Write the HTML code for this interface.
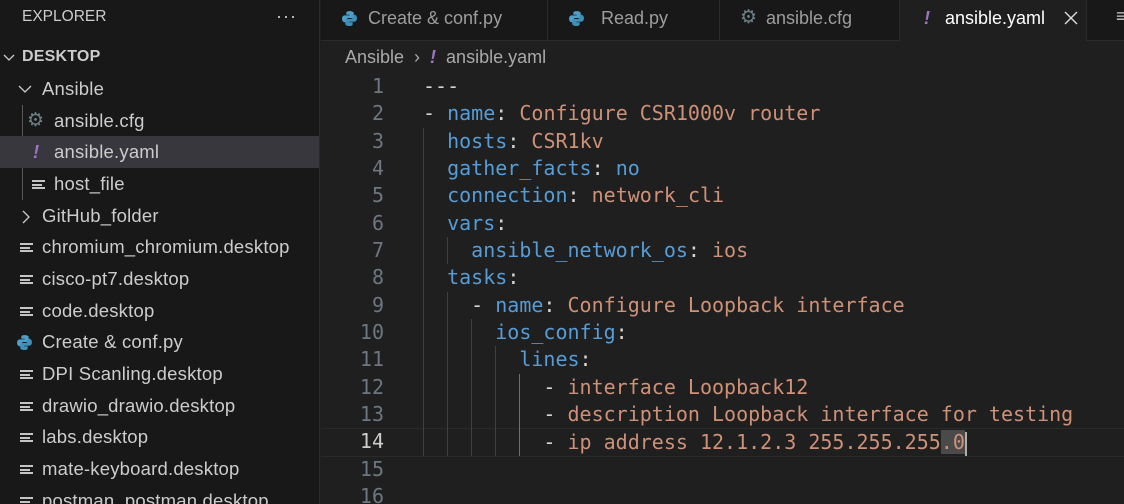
<!DOCTYPE html>
<html><head><meta charset="utf-8"><style>
*{margin:0;padding:0;box-sizing:border-box}
html,body{width:1124px;height:504px;overflow:hidden}
body{background:#1f1f1f;font-family:"Liberation Sans","DejaVu Sans",sans-serif;color:#cccccc;position:relative}
.abs{position:absolute;white-space:pre}
#side{position:absolute;left:0;top:0;width:320px;height:504px;background:#181818;border-right:1px solid #2b2b2b;overflow:hidden}
.row{position:absolute;left:0;width:320px;height:32px;font-size:18.5px;line-height:32px;color:#cccccc;white-space:pre;letter-spacing:0.2px}
#tabs{position:absolute;left:321px;top:0;width:803px;height:41px;background:#181818;border-bottom:1px solid #2b2b2b}
.tab{position:absolute;top:0;height:41px;border-right:1px solid #2b2b2b;font-size:18px;line-height:36px;color:#9d9d9d;white-space:pre}
.code{position:absolute;left:423px;font-family:"DejaVu Sans Mono","Liberation Mono",monospace;font-size:20px;height:27px;line-height:27px;white-space:pre;color:#d4d4d4}
.ln{position:absolute;left:330px;width:54px;text-align:right;font-family:"DejaVu Sans Mono",monospace;font-size:20px;height:27px;line-height:27px;color:#6e7681}
.k{color:#569cd6}.s{color:#ce9178}
.g{position:absolute;width:1px;background:#404040}
.fi{position:absolute;top:12px;width:13px;height:9px;border-top:2px solid #c5c5c5;border-bottom:2px solid #c5c5c5}
.fi:after{content:"";position:absolute;left:0;top:1.5px;width:10px;height:2px;background:#c5c5c5}
</style></head><body>
<div id="side">
<div class="abs" style="left:22px;top:8px;font-size:15.5px;color:#cccccc">EXPLORER</div>
<div class="abs" style="left:276px;top:6px;font-size:18px;letter-spacing:1px">···</div>
<div class="row" style="top:41px;font-weight:bold;font-size:16px"><svg style="position:absolute;left:3px;top:12px" width="12" height="9"><path d="M1 2l5 5 5-5" stroke="#ccc" fill="none" stroke-width="1.3"/></svg><span style="position:absolute;left:22px">DESKTOP</span></div>
<div class="row" style="top:73px"><svg style="position:absolute;left:18px;top:11px" width="14" height="10"><path d="M1 2l6 6 6-6" stroke="#ccc" fill="none" stroke-width="1.3"/></svg><span style="position:absolute;left:42px">Ansible</span></div>
<div class="g" style="left:22px;top:105px;height:95px;background:#585858"></div>
<div class="row" style="top:105px"><span style="position:absolute;left:27px;color:#6d8086;font-size:19px">⚙</span><span style="position:absolute;left:54px">ansible.cfg</span></div>
<div class="row" style="top:136px;background:#37373d"><span style="position:absolute;left:33px;color:#a074c4;font-style:italic;font-weight:bold">!</span><span style="position:absolute;left:54px">ansible.yaml</span></div>
<div class="row" style="top:168px"><span class="fi" style="left:32px"></span><span style="position:absolute;left:54px">host_file</span></div>
<div class="row" style="top:200px"><svg style="position:absolute;left:21px;top:10px" width="10" height="14"><path d="M2 1l6 6-6 6" stroke="#ccc" fill="none" stroke-width="1.3"/></svg><span style="position:absolute;left:42px">GitHub_folder</span></div>
<div class="row" style="top:231px"><span class="fi" style="left:20px"></span><span style="position:absolute;left:42px">chromium_chromium.desktop</span></div>
<div class="row" style="top:263px"><span class="fi" style="left:20px"></span><span style="position:absolute;left:42px">cisco-pt7.desktop</span></div>
<div class="row" style="top:295px"><span class="fi" style="left:20px"></span><span style="position:absolute;left:42px">code.desktop</span></div>
<div class="row" style="top:326px"><svg style="position:absolute;left:16px;top:8px" width="17" height="17" viewBox="0 0 16 16"><path d="M8 1c-3 0-3 1.2-3 2v1.5h3.2V5H3.5C2 5 1 6.3 1 8.2S2 11.5 3.5 11.5H5V9.7c0-1.2 1-2.2 2.2-2.2h3c1 0 1.8-.8 1.8-1.8V3C12 1.8 10.6 1 8 1z" fill="#4d9ec9"/><path d="M8 15c3 0 3-1.2 3-2v-1.5H7.8V11h4.7c1.5 0 2.5-1.3 2.5-3.2S14 4.5 12.5 4.5H11v1.8c0 1.2-1 2.2-2.2 2.2h-3C4.8 8.5 4 9.3 4 10.3V13c0 1.2 1.4 2 4 2z" fill="#3f8fb8"/></svg><span style="position:absolute;left:42px">Create &amp; conf.py</span></div>
<div class="row" style="top:358px"><span class="fi" style="left:20px"></span><span style="position:absolute;left:42px">DPI Scanling.desktop</span></div>
<div class="row" style="top:390px"><span class="fi" style="left:20px"></span><span style="position:absolute;left:42px">drawio_drawio.desktop</span></div>
<div class="row" style="top:421px"><span class="fi" style="left:20px"></span><span style="position:absolute;left:42px">labs.desktop</span></div>
<div class="row" style="top:453px"><span class="fi" style="left:20px"></span><span style="position:absolute;left:42px">mate-keyboard.desktop</span></div>
<div class="row" style="top:485px"><span class="fi" style="left:20px"></span><span style="position:absolute;left:42px">postman_postman.desktop</span></div>
</div>
<div id="tabs">
<div class="tab" style="left:0;width:227px"><svg style="position:absolute;left:20px;top:10px" width="17" height="17" viewBox="0 0 16 16"><path d="M8 1c-3 0-3 1.2-3 2v1.5h3.2V5H3.5C2 5 1 6.3 1 8.2S2 11.5 3.5 11.5H5V9.7c0-1.2 1-2.2 2.2-2.2h3c1 0 1.8-.8 1.8-1.8V3C12 1.8 10.6 1 8 1z" fill="#4d9ec9"/><path d="M8 15c3 0 3-1.2 3-2v-1.5H7.8V11h4.7c1.5 0 2.5-1.3 2.5-3.2S14 4.5 12.5 4.5H11v1.8c0 1.2-1 2.2-2.2 2.2h-3C4.8 8.5 4 9.3 4 10.3V13c0 1.2 1.4 2 4 2z" fill="#3f8fb8"/></svg><span style="position:absolute;left:47px">Create &amp; conf.py</span></div>
<div class="tab" style="left:227px;width:172px"><svg style="position:absolute;left:20px;top:10px" width="17" height="17" viewBox="0 0 16 16"><path d="M8 1c-3 0-3 1.2-3 2v1.5h3.2V5H3.5C2 5 1 6.3 1 8.2S2 11.5 3.5 11.5H5V9.7c0-1.2 1-2.2 2.2-2.2h3c1 0 1.8-.8 1.8-1.8V3C12 1.8 10.6 1 8 1z" fill="#4d9ec9"/><path d="M8 15c3 0 3-1.2 3-2v-1.5H7.8V11h4.7c1.5 0 2.5-1.3 2.5-3.2S14 4.5 12.5 4.5H11v1.8c0 1.2-1 2.2-2.2 2.2h-3C4.8 8.5 4 9.3 4 10.3V13c0 1.2 1.4 2 4 2z" fill="#3f8fb8"/></svg><span style="position:absolute;left:53px">Read.py</span></div>
<div class="tab" style="left:399px;width:180px"><span style="position:absolute;left:20px;color:#6d8086;font-size:19px">⚙</span><span style="position:absolute;left:46px">ansible.cfg</span></div>
<div class="tab" style="left:579px;width:187px;background:#1f1f1f;height:42px;color:#ffffff"><span style="position:absolute;left:24px;color:#a074c4;font-style:italic;font-weight:bold">!</span><span style="position:absolute;left:45px">ansible.yaml</span><svg style="position:absolute;left:164px;top:11px" width="14" height="14"><path d="M1 1l12 12M13 1L1 13" stroke="#ddd" stroke-width="1.4"/></svg></div>
<div class="abs" style="left:795px;top:6px;font-size:18px;color:#ccc">≡</div>
</div>
<div class="abs" style="left:345px;top:47px;font-size:18px;color:#a9a9a9">Ansible  ›  <span style="color:#a074c4;font-style:italic;font-weight:bold">!</span>  ansible.yaml</div>
<div style="position:absolute;left:321px;top:428px;width:803px;height:29px;border-top:1px solid #2a2a2a;border-bottom:1px solid #2a2a2a"></div>
<div class="g" style="left:423px;top:128px;height:328px"></div>
<div class="g" style="left:447px;top:237px;height:27px"></div>
<div class="g" style="left:447px;top:292px;height:164px"></div>
<div class="g" style="left:471px;top:319px;height:137px"></div>
<div class="g" style="left:495px;top:346px;height:110px"></div>
<div class="g" style="left:519px;top:374px;height:82px;background:#707070"></div>
<div class="ln" style="top:73px">1</div><div class="code" style="top:73px">---</div>
<div class="ln" style="top:100px">2</div><div class="code" style="top:100px">- <span class="k">name</span>: <span class="s">Configure CSR1000v router</span></div>
<div class="ln" style="top:128px">3</div><div class="code" style="top:128px">  <span class="k">hosts</span>: <span class="s">CSR1kv</span></div>
<div class="ln" style="top:155px">4</div><div class="code" style="top:155px">  <span class="k">gather_facts</span>: <span class="k">no</span></div>
<div class="ln" style="top:182px">5</div><div class="code" style="top:182px">  <span class="k">connection</span>: <span class="s">network_cli</span></div>
<div class="ln" style="top:210px">6</div><div class="code" style="top:210px">  <span class="k">vars</span>:</div>
<div class="ln" style="top:237px">7</div><div class="code" style="top:237px">    <span class="k">ansible_network_os</span>: <span class="s">ios</span></div>
<div class="ln" style="top:264px">8</div><div class="code" style="top:264px">  <span class="k">tasks</span>:</div>
<div class="ln" style="top:292px">9</div><div class="code" style="top:292px">    - <span class="k">name</span>: <span class="s">Configure Loopback interface</span></div>
<div class="ln" style="top:319px">10</div><div class="code" style="top:319px">      <span class="k">ios_config</span>:</div>
<div class="ln" style="top:346px">11</div><div class="code" style="top:346px">        <span class="k">lines</span>:</div>
<div class="ln" style="top:374px">12</div><div class="code" style="top:374px">          - <span class="s">interface Loopback12</span></div>
<div class="ln" style="top:401px">13</div><div class="code" style="top:401px">          - <span class="s">description Loopback interface for testing</span></div>
<div class="ln" style="top:428px;color:#cccccc">14</div><div class="code" style="top:429px">          - <span class="s">ip address 12.1.2.3 255.255.255<span style="background:#4a4a4a">.0</span></span><span style="display:inline-block;width:2px;height:24px;background:#aeafad;vertical-align:middle"></span></div>
<div class="ln" style="top:456px">15</div>
<div class="ln" style="top:483px">16</div>
</body></html>
